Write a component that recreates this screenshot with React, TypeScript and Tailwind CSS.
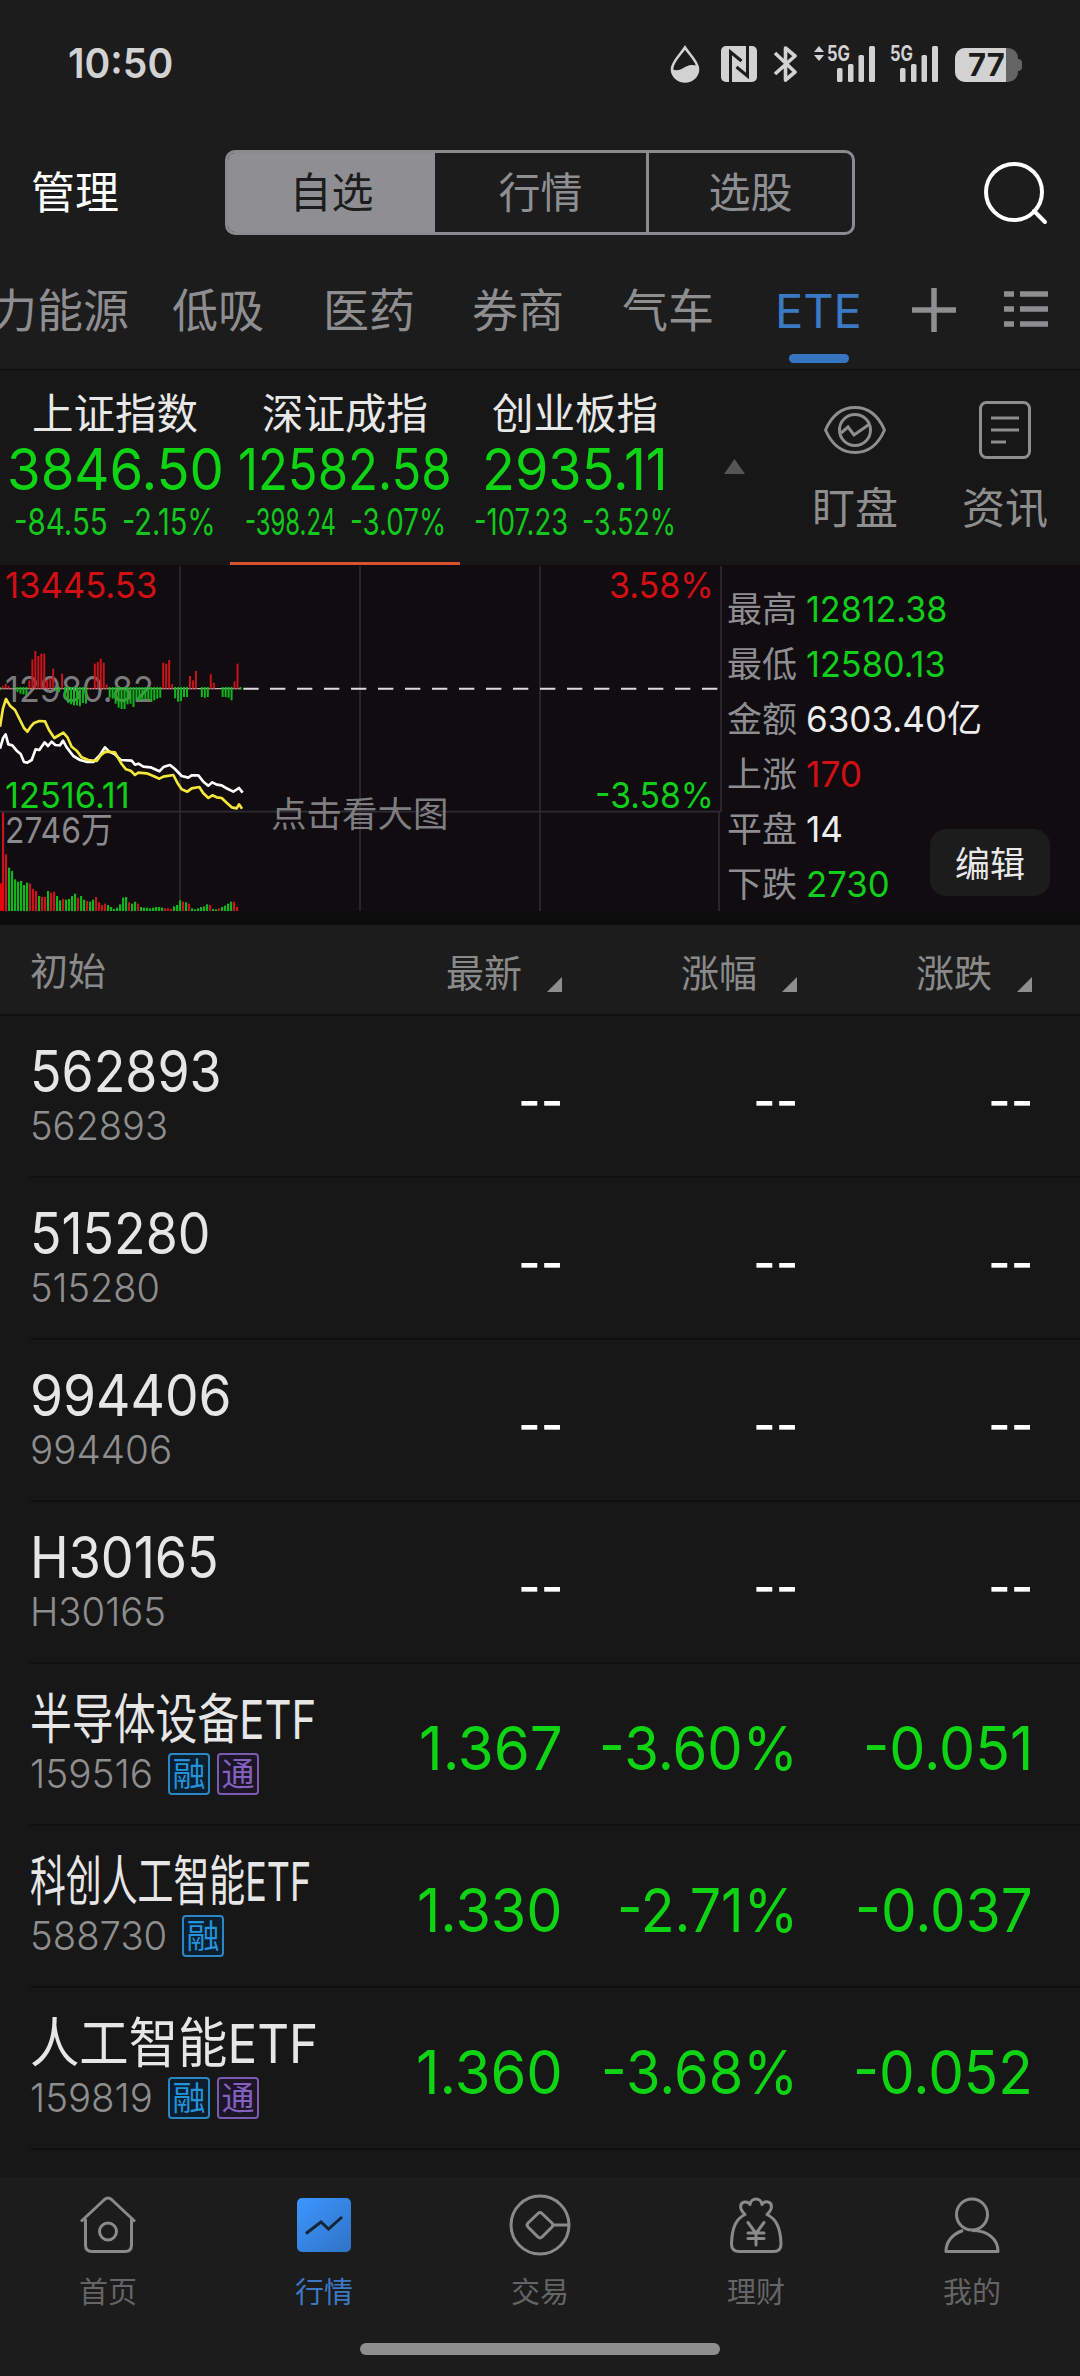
import { useLayoutEffect, useRef, useState } from "react";
import type { ReactNode } from "react";
import clsx from "clsx";

type Quote = {
    name: string;
    nameWidth: number;
    code: string;
    codeWidth: number;
    tags?: string[];
    cells?: { text: string; width: number }[];
};

const tabs = [
    { label: "低吸", className: "ml-[43px]" },
    { label: "医药", className: "ml-[58px]" },
    { label: "券商", className: "ml-[56px]" },
    { label: "气车", className: "ml-[57px]" },
];

const indices = [
    { name: "上证指数", price: "3846.50", priceWidth: 217, diff: "-84.55", diffWidth: 94, rate: "-2.15%", rateWidth: 94 },
    { name: "深证成指", price: "12582.58", priceWidth: 214, diff: "-398.24", diffWidth: 91, rate: "-3.07%", rateWidth: 96, active: true },
    { name: "创业板指", price: "2935.11", priceWidth: 186, diff: "-107.23", diffWidth: 94, rate: "-3.52%", rateWidth: 94 },
];

const stats = [
    { label: "最高", value: "12812.38", width: 141, className: "text-[#10ce1a]" },
    { label: "最低", value: "12580.13", width: 140, className: "text-[#10ce1a]" },
    { label: "金额", value: "6303.40亿", width: 176, className: "text-[#ededed]" },
    { label: "上涨", value: "170", width: 56, className: "text-[#d20f14]" },
    { label: "平盘", value: "14", width: 37, className: "text-[#ededed]" },
    { label: "下跌", value: "2730", width: 84, className: "text-[#10ce1a]" },
];

const quotes: Quote[] = [
    { name: "562893", nameWidth: 192, code: "562893", codeWidth: 138 },
    { name: "515280", nameWidth: 180, code: "515280", codeWidth: 130 },
    { name: "994406", nameWidth: 202, code: "994406", codeWidth: 142 },
    { name: "H30165", nameWidth: 189, code: "H30165", codeWidth: 136 },
    {
        name: "半导体设备ETF", nameWidth: 286, code: "159516", codeWidth: 123, tags: ["融", "通"],
        cells: [{ text: "1.367", width: 144 }, { text: "-3.60%", width: 199 }, { text: "-0.051", width: 170 }],
    },
    {
        name: "科创人工智能ETF", nameWidth: 281, code: "588730", codeWidth: 137, tags: ["融"],
        cells: [{ text: "1.330", width: 146 }, { text: "-2.71%", width: 181 }, { text: "-0.037", width: 178 }],
    },
    {
        name: "人工智能ETF", nameWidth: 288, code: "159819", codeWidth: 123, tags: ["融", "通"],
        cells: [{ text: "1.360", width: 147 }, { text: "-3.68%", width: 197 }, { text: "-0.052", width: 180 }],
    },
];

// one entry per minute, positive is drawn red above the axis
const strength = [
    -10, 8, 14, 8, 3, -5, -15, -20, -22, -25, 25, 88, 113, 98, 105, 105, 25, 32, 60, -12, -15, 45, -35, -48, -52, -55, -55,
    -58, -48, -50, 3, 3, 75, 80, 90, 78, 12, -32, -35, -50, -62, -66, -66, -52, -50, -60, -38, -42, -40, -38, -36, -45, -40,
    -35, -32, 78, 75, 86, 13, -34, -44, -42, -30, -30, 38, 25, 53, 0, -30, -32, -30, 43, 18, 0, 0, -30, -30, -32, -40, 22,
    75, -8,
];

// negative is a falling minute (green)
const volumes = [
    82, 295, 170, -130, -120, -95, -88, -90, -78, -85, 82, 66, 60, -45, 42, 42, -60, 55, 58, -45, -32, 36, -34, -36, -45,
    -52, 40, -45, -34, 30, -28, -34, 42, 26, 18, 22, -18, -12, -6, -10, -20, -40, -42, 26, -22, -28, 22, -12, -10, -10, -8,
    -10, -12, -12, -10, 8, 8, 6, -14, -18, -32, 28, -26, 22, -8, -5, -8, -12, -14, -20, 18, -6, -5, 8, -12, -16, -22, -28,
    28, 12,
];

const averageLine =
    "0,500 9,445 18,417 30,437 45,450 60,480 72,504 82,515 92,500 102,489 118,483 135,484 147,510 163,534 178,525 190,518 203,533 215,560 230,572 245,592 265,600 290,603 303,585 317,575 345,577 355,595 365,612 378,628 392,632 405,645 415,638 440,640 460,648 478,656 490,650 520,645 532,668 545,688 562,695 575,685 598,681 610,700 625,714 637,706 650,712 665,714 680,728 695,742 710,745 717,733 726,746";
const priceLine =
    "0,566 9,535 17,523 25,553 37,556 50,572 62,582 72,606 82,608 95,600 107,568 118,570 134,547 144,558 155,545 166,555 180,556 189,542 200,562 220,588 240,600 262,606 280,606 300,585 315,562 328,575 345,583 362,600 395,602 405,614 415,611 430,620 452,622 478,634 492,620 510,615 525,627 545,648 565,653 575,646 595,646 610,665 625,677 637,667 650,674 665,676 678,684 700,695 717,684 728,698";

/** Single line label that is squeezed or stretched to the given width. */
function FitText({ width, className, children }: { width: number; className?: string; children: ReactNode }) {
    const ref = useRef<HTMLSpanElement>(null);
    const [scale, setScale] = useState(1);

    useLayoutEffect(() => {
        if (ref.current) setScale(width / ref.current.offsetWidth);
    }, [width, children]);

    return (
        <span className={clsx("block whitespace-nowrap", className)} style={{ width }}>
            <span ref={ref} className="inline-block origin-left" style={{ transform: `scaleX(${scale})` }}>
                {children}
            </span>
        </span>
    );
}

function Signal({ roaming }: { roaming?: boolean }) {
    return (
        <svg width="62" height="38" viewBox="0 0 62 38" fill="#d2d2d2" className="overflow-visible">
            {roaming && <path d="M0 7L5 1l5 6zM0 10h10l-5 6z" />}
            <text x="13" y="16" fontSize="21" fontWeight="700" textLength="23" lengthAdjust="spacingAndGlyphs">
                5G
            </text>
            <rect x="23" y="23" width="5.5" height="14" rx="1.5" />
            <rect x="34" y="19" width="5.5" height="18" rx="1.5" />
            <rect x="44.5" y="10" width="5.5" height="27" rx="1.5" />
            <rect x="55" y="1" width="6" height="36" rx="1.5" />
        </svg>
    );
}

function StatusBar() {
    return (
        <div className="flex h-[127px] items-center pr-[58px] pl-[68px] text-[#d2d2d2]">
            <FitText width={105} className="text-[41px] font-semibold">10:50</FitText>
            <div className="ml-auto flex items-center">
                <svg width="32" height="38" viewBox="0 0 32 38" className="mr-[20px]">
                    <path d="M16 2.5C12 9 3 16.500 3 24a13 12.500 0 0 0 26 0C29 16.500 20 9 16 2.500z" fill="none" stroke="#d2d2d2" strokeWidth="2.6" />
                    <path d="M3 24c5 2.500 9 .5 13-2s8-2.500 12.500-1.500L29 24a13 12.500 0 0 1-26 0z" fill="#d2d2d2" />
                </svg>
                <svg width="36" height="38" viewBox="0 0 36 38" className="mr-[17px]">
                    <rect y="1" width="36" height="36" rx="5" fill="#d2d2d2" />
                    <path d="M9.500 37V7l11 9M26.500 1v30l-11-9" fill="none" stroke="#1c1c1c" strokeWidth="3" />
                </svg>
                <svg width="24" height="38" viewBox="0 0 24 38" className="mr-[16px]">
                    <path d="M1 8l20 19-9.500 8V3L21 11 1 29" fill="none" stroke="#d2d2d2" strokeWidth="3.600" strokeLinejoin="round" />
                </svg>
                <Signal roaming />
                <span className="w-px" />
                <Signal />
                <div className="mt-[2px] ml-[16px] flex items-center">
                    <div className="flex h-[34px] w-[63px] items-center overflow-hidden rounded-[10px] bg-[#646464]">
                        <div className="flex h-full w-[51px] items-center bg-[#d2d2d2] pl-[13px] text-[#1c1c1c]">
                            <FitText width={37} className="text-[31px] font-bold">77</FitText>
                        </div>
                    </div>
                    <div className="h-[12px] w-[4px] rounded-r-full bg-[#646464]" />
                </div>
            </div>
        </div>
    );
}

function Header() {
    return (
        <div className="flex h-[130px] items-center pr-[30px] pl-[31px]">
            <span className="w-[194px] pt-[2px] text-[44px] text-white">管理</span>
            <div className="flex h-[85px] w-[630px] overflow-hidden rounded-[10px] border-[3px] border-[#8b8b8f] text-[42px] text-[#8e8e93]">
                <div className="flex w-[207px] items-center justify-center bg-[#8e8e93] pt-[2px] text-[#1c1c1c]">自选</div>
                <div className="flex flex-1 items-center justify-center pt-[2px]">行情</div>
                <div className="flex w-[206px] items-center justify-center border-l-[3px] border-[#8b8b8f] pt-[2px]">选股</div>
            </div>
            <svg width="66" height="66" viewBox="0 0 66 66" className="ml-auto" fill="none" stroke="#fff" strokeWidth="4" strokeLinecap="round">
                <circle cx="30" cy="33" r="28" />
                <path d="M50 52l11 11" />
            </svg>
        </div>
    );
}

function GroupTabs() {
    return (
        <div className="flex h-[113px] items-center overflow-hidden border-b border-[#0d0d0d] pb-[6px] text-[46px] whitespace-nowrap text-[#8e8e91]">
            <span className="ml-[-9px] w-[138px]">力能源</span>
            {tabs.map((tab) => (
                <span key={tab.label} className={clsx("w-[93px]", tab.className)}>
                    {tab.label}
                </span>
            ))}
            <div className="relative ml-[60px] text-[#3b79c4]">
                <FitText width={87} className="text-[47px]">ETE</FitText>
                <div className="absolute top-[67px] left-[14px] h-[9px] w-[60px] rounded-full bg-[#3575c2]" />
            </div>
            <svg width="44" height="44" viewBox="0 0 44 44" className="ml-[50px]" stroke="#8e8e91" strokeWidth="5.500">
                <path d="M22 0v44M0 22h44" />
            </svg>
            <svg width="44" height="40" viewBox="0 0 44 40" className="ml-[48px]" stroke="#8e8e91" strokeWidth="5.500">
                <path d="M0 4h10M16 4h28M0 19h10M16 19h28M0 34h10M16 34h28" />
            </svg>
        </div>
    );
}

function IndexBar() {
    return (
        <div className="flex h-[195px] bg-[#171717]">
            {indices.map((item) => (
                <div
                    key={item.name}
                    className={clsx("flex w-[230px] flex-col items-center border-b-[3px] pt-[23px]", item.active ? "border-[#d8532c]" : "border-transparent")}
                >
                    <span className="text-[41.5px] leading-[42px] text-[#e8e8e8]">{item.name}</span>
                    <FitText width={item.priceWidth} className="mt-[5px] text-[58px] text-[#0fd414]">{item.price}</FitText>
                    <div className="mt-[5px] flex gap-[14px] text-[37px] text-[#12c81c]">
                        <FitText width={item.diffWidth}>{item.diff}</FitText>
                        <FitText width={item.rateWidth}>{item.rate}</FitText>
                    </div>
                </div>
            ))}
            <svg width="21" height="15" viewBox="0 0 21 15" className="mt-[89px] ml-[34px]" fill="#555">
                <path d="M10.500 0L21 15H0z" />
            </svg>
            <div className="ml-[67px] flex flex-col items-center pt-[31px] text-[#8e8e8e]">
                <svg width="62" height="58" viewBox="0 0 62 58" fill="none" stroke="#8e8e8e" strokeWidth="3">
                    <path d="M1.500 29C8 14 18 6.500 31 6.500S54 14 60.500 29C54 44 44 51.500 31 51.500S8 44 1.500 29z" strokeLinejoin="round" />
                    <circle cx="31" cy="29" r="15.500" />
                    <path d="M17 32l7-6 6 8 15-10.500" />
                </svg>
                <span className="mt-[27px] text-[43px] leading-[44px]">盯盘</span>
            </div>
            <div className="ml-[64px] flex flex-col items-center pt-[31px] text-[#8e8e8e]">
                <svg width="52" height="58" viewBox="0 0 52 58" fill="none" stroke="#8e8e8e" strokeWidth="3">
                    <rect x="1.500" y="1.500" width="49" height="55" rx="6" />
                    <path d="M12 17h28M12 29h28M12 41h15" />
                </svg>
                <span className="mt-[27px] text-[43px] leading-[44px]">资讯</span>
            </div>
        </div>
    );
}

function MinuteChart() {
    return (
        <div className="relative h-[346px] w-[724px] text-[36px]">
            <FitText width={152} className="absolute top-[2px] left-[5px] text-[#d20f14]">13445.53</FitText>
            <FitText width={105} className="absolute top-[2px] right-[10px] text-[#d20f14]">3.58%</FitText>
            <FitText width={149} className="absolute top-[106px] left-[5px] text-[#7a797c]">12980.82</FitText>
            <svg width="724" height="346" viewBox="0 15 2172 1038" className="absolute inset-0" fill="none">
                <path d="M540 18V1053M1080 18V1053M1620 18V1053M2163 18V755M2157 755V1053M0 755H2163" stroke="#2d2c30" strokeWidth="5" />
                <path d="M0 386H720" stroke="#bdb5b5" strokeWidth="4" />
                <path d="M730 386H776M810 386H2160" stroke="#dedbdc" strokeWidth="6" strokeDasharray="46 35" />
                {strength.map((v, i) => (
                    <rect key={i} x={i * 9 - 4 - i * 0.08} y={v > 0 ? 386 - v : 381} width="6" height={Math.abs(v)} fill={v > 0 ? "#c8141b" : "#12b51c"} />
                ))}
                {volumes.map((v, i) => (
                    <rect key={i} x={i * 9 - 3} y={1053 - Math.abs(v)} width="6.5" height={Math.abs(v)} fill={v > 0 ? "#c8141b" : "#12b51c"} />
                ))}
                <rect x="0" y="970" width="11" height="83" fill="#e8060c" />
                <polyline points={priceLine} stroke="#fff" strokeWidth="8" strokeLinejoin="round" />
                <polyline points={averageLine} stroke="#f4e63a" strokeWidth="8" strokeLinejoin="round" />
            </svg>
            <FitText width={125} className="absolute top-[212px] left-[5px] text-[#10ce1a]">12516.11</FitText>
            <FitText width={119} className="absolute top-[212px] right-[10px] text-[#10ce1a]">-3.58%</FitText>
            <FitText width={108} className="absolute top-[247px] left-[5px] text-[#8a898c]">2746万</FitText>
            <span className="absolute top-[232px] left-[271px] text-[35.5px] text-[#7e7d80]">点击看大图</span>
        </div>
    );
}

function ChartPanel() {
    return (
        <div className="flex h-[360px] border-b-[14px] border-[#0d0c0d] bg-[#100c10]">
            <MinuteChart />
            <div className="relative flex-1 pt-[16px] pl-[3px]">
                {stats.map((item) => (
                    <div key={item.label} className="flex h-[55px] items-center text-[36px]">
                        <span className="w-[79px] pt-px text-[35px] text-[#8e8d90]">{item.label}</span>
                        <FitText width={item.width} className={item.className}>{item.value}</FitText>
                    </div>
                ))}
                <button className="absolute right-[30px] bottom-[15px] h-[67px] w-[120px] rounded-[16px] bg-[#1c1c1c] pt-[4px] text-[35px] text-[#e8e8e8]">
                    编辑
                </button>
            </div>
        </div>
    );
}

function SortTitle({ children }: { children: ReactNode }) {
    return (
        <div className="flex w-[235px] items-center justify-end pt-[6px]">
            <span>{children}</span>
            <svg width="15" height="15" viewBox="0 0 15 15" className="mt-[23px] ml-[25px]" fill="#8e8e8e">
                <path d="M15 0v15H0z" />
            </svg>
        </div>
    );
}

function Tag({ text }: { text: string }) {
    return (
        <span
            className={clsx(
                "flex h-[42px] w-[42px] items-center justify-center rounded-[4px] border-2 pt-px text-[33px]",
                text === "融" ? "border-[#2a86c4] bg-[#0c1f2e] text-[#2492dc]" : "border-[#7b5bb0] bg-[#1b1526] text-[#8560c0]",
            )}
        >
            {text}
        </span>
    );
}

function QuoteRow({ quote }: { quote: Quote }) {
    return (
        <div className="ml-[30px] flex h-[162px] items-center border-b-2 border-[#101010]">
            <div className="flex w-[298px] shrink-0 flex-col">
                <FitText width={quote.nameWidth} className={clsx("mt-px leading-[57px] text-[#e6e6e6]", quote.tags ? "text-[54px]" : "text-[57px]")}>
                    {quote.name}
                </FitText>
                <div className="mt-px flex h-[50px] items-center gap-[7px]">
                    <FitText width={quote.codeWidth} className="mr-[8px] shrink-0 text-[40px] font-light text-[#8e8e8e]">{quote.code}</FitText>
                    {quote.tags?.map((tag) => <Tag key={tag} text={tag} />)}
                </div>
            </div>
            {quote.cells
                ? quote.cells.map((cell) => (
                      <div key={cell.text} className="flex w-[235px] shrink-0 justify-end pt-[8px] text-[61px] text-[#0fd414]">
                          <FitText width={cell.width}>{cell.text}</FitText>
                      </div>
                  ))
                : [0, 1, 2].map((n) => (
                      <div key={n} className="flex w-[235px] shrink-0 justify-end pt-[9px] text-[57px] text-white">
                          <FitText width={45}>--</FitText>
                      </div>
                  ))}
        </div>
    );
}

const icon = { width: 62, height: 62, viewBox: "0 0 62 62", fill: "none", stroke: "#8a8a8a", strokeWidth: 3 };

const navItems = [
    {
        label: "首页",
        icon: (
            <svg {...icon} strokeLinejoin="round">
                <path d="M4 27.500L27.500 5.500q3.500-3 7 0L58 27.500M8.500 25v26q0 6.500 6.500 6.500h33q6.500 0 6.500-6.500V25" />
                <circle cx="31" cy="37.500" r="8.500" />
            </svg>
        ),
    },
    {
        label: "行情",
        active: true,
        icon: (
            <svg {...icon}>
                <defs>
                    <linearGradient id="market" x1="0" y1="0" x2="1" y2="1">
                        <stop stopColor="#3b96ff" />
                        <stop offset="1" stopColor="#3073c4" />
                    </linearGradient>
                </defs>
                <rect x="4" y="4" width="54" height="54" rx="5" fill="url(#market)" stroke="none" />
                <path d="M13 39.500L28 28l7.500 7L49 23" stroke="#152437" />
            </svg>
        ),
    },
    {
        label: "交易",
        icon: (
            <svg {...icon} strokeLinejoin="round">
                <circle cx="31" cy="31" r="29" />
                <path d="M29 19.500q2-2 4 0L43 29q2 2 0 4L33 43q-2 2-4 0L19 33q-2-2 0-4zM44 31h16" />
            </svg>
        ),
    },
    {
        label: "理财",
        icon: (
            <svg {...icon} strokeLinejoin="round" strokeLinecap="round">
                <path d="M20 20.500C14 15 14.500 9 19.500 8q4-.5 5.500 2.500C26 3 36 3 37 10.500 38.500 7.500 41 7.500 43 8c4.500 1 5 7-1 12.500C51 25 55.500 33 56 50q0 7.500-7.500 7.500h-34Q6.500 57.500 6.500 50C7 33 11 25 20 20.500z" />
                <path d="M23 28.500l8 11 8-11M23 39h16M23 44.500h16M31 39.500V51" />
            </svg>
        ),
    },
    {
        label: "我的",
        icon: (
            <svg {...icon}>
                <circle cx="31" cy="20.500" r="15.500" />
                <path d="M22 36.500C11 40 5 48 5 57.500h52C57 45 47 36.500 31 36.500" strokeLinejoin="round" />
            </svg>
        ),
    },
];

function BottomNav() {
    return (
        <div className="flex h-[199px] flex-col items-center bg-[#1c1c1c]">
            <div className="flex w-full">
                {navItems.map((item) => (
                    <div key={item.label} className={clsx("flex flex-1 flex-col items-center pt-[17px]", item.active ? "text-[#3b79c4]" : "text-[#656565]")}>
                        {item.icon}
                        <span className="mt-[22px] text-[29px] leading-[30px]">{item.label}</span>
                    </div>
                ))}
            </div>
            <div className="mt-[35px] h-[12px] w-[360px] rounded-full bg-[#8e8e8e]" />
        </div>
    );
}

export default function App() {
    return (
        <div className="flex h-[2376px] w-[1080px] flex-col overflow-hidden bg-[#1c1c1c] font-['Inter','Noto_Sans_CJK_SC',sans-serif] leading-none">
            <StatusBar />
            <Header />
            <GroupTabs />
            <IndexBar />
            <ChartPanel />
            <div className="flex h-[91px] items-center border-b-2 border-[#101010] pr-[48px] pl-[30px] text-[38px] text-[#8a8a8a]">
                <span className="mr-auto pt-[2px]">初始</span>
                <SortTitle>最新</SortTitle>
                <SortTitle>涨幅</SortTitle>
                <SortTitle>涨跌</SortTitle>
            </div>
            <div className="h-[1161px] overflow-hidden bg-[#171717]">
                {quotes.map((quote) => (
                    <QuoteRow key={quote.name} quote={quote} />
                ))}
            </div>
            <BottomNav />
        </div>
    );
}
